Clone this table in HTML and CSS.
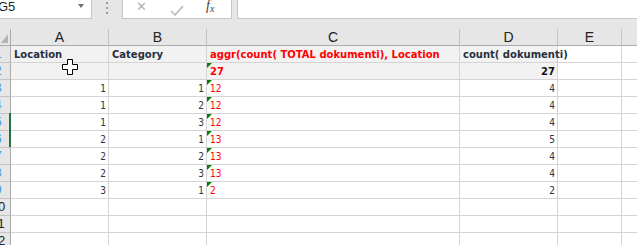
FILE: index.html
```html
<!DOCTYPE html>
<html>
<head>
<meta charset="utf-8">
<link rel="stylesheet" href="styles.css">
</head>
<body>
<div class="app">
  <div class="fbar">
    <div class="namebox"><span class="nb-text">G5</span><span class="nb-arrow"></span></div>
    <div class="dots"><i></i><i></i><i></i></div>
    <div class="btnbox">
      <span class="fbtn x">✕</span>
      <span class="fbtn ok"><svg width="14" height="11" viewBox="0 0 14 11"><path d="M1 6 L5 10 L13 1" fill="none" stroke="#b3b3b3" stroke-width="1.4"/></svg></span>
      <span class="fbtn fx">f<sub>x</sub></span>
    </div>
    <div class="formula"></div>
  </div>
  <div class="strip"></div>
  <div class="sheet">
    <div class="grid">
      <div class="ch corner"><span class="tri"></span></div>
      <div class="ch">A</div><div class="ch">B</div><div class="ch">C</div><div class="ch">D</div><div class="ch">E</div><div class="ch last"></div>

      <div class="rh blue"><span>1</span></div>
      <div class="c g b hd">Location</div><div class="c g b hd">Category</div><div class="c g b red">aggr(count( TOTAL dokumenti), Location</div><div class="c g b hd">count( dokumenti)</div><div class="c"></div><div class="c last"></div>

      <div class="rh blue"><span>2</span></div>
      <div class="c g"></div><div class="c g"></div><div class="c g b red mark">27</div><div class="c g b r blk">27</div><div class="c"></div><div class="c last"></div>

      <div class="rh blue"><span>3</span></div>
      <div class="c r n">1</div><div class="c r n">1</div><div class="c n red mark">12</div><div class="c r n">4</div><div class="c"></div><div class="c last"></div>

      <div class="rh blue"><span>4</span></div>
      <div class="c r n">1</div><div class="c r n">2</div><div class="c n red mark">12</div><div class="c r n">4</div><div class="c"></div><div class="c last"></div>

      <div class="rh blue"><span>5</span></div>
      <div class="c r n">1</div><div class="c r n">3</div><div class="c n red mark">12</div><div class="c r n">4</div><div class="c"></div><div class="c last"></div>

      <div class="rh blue"><span>6</span></div>
      <div class="c r n">2</div><div class="c r n">1</div><div class="c n red mark">13</div><div class="c r n">5</div><div class="c"></div><div class="c last"></div>

      <div class="rh blue"><span>7</span></div>
      <div class="c r n">2</div><div class="c r n">2</div><div class="c n red mark">13</div><div class="c r n">4</div><div class="c"></div><div class="c last"></div>

      <div class="rh blue"><span>8</span></div>
      <div class="c r n">2</div><div class="c r n">3</div><div class="c n red mark">13</div><div class="c r n">4</div><div class="c"></div><div class="c last"></div>

      <div class="rh blue"><span>9</span></div>
      <div class="c r n">3</div><div class="c r n">1</div><div class="c n red mark">2</div><div class="c r n">2</div><div class="c"></div><div class="c last"></div>

      <div class="rh"><span>10</span></div>
      <div class="c"></div><div class="c"></div><div class="c"></div><div class="c"></div><div class="c"></div><div class="c last"></div>

      <div class="rh"><span>11</span></div>
      <div class="c"></div><div class="c"></div><div class="c"></div><div class="c"></div><div class="c"></div><div class="c last"></div>

      <div class="rh"><span>12</span></div>
      <div class="c"></div><div class="c"></div><div class="c"></div><div class="c"></div><div class="c"></div><div class="c last"></div>
    </div>
    <div class="selbar"></div>
    <svg class="cursor" width="16" height="16" viewBox="0 0 16 16"><path d="M5.5 0.5 H10.5 V5.5 H15.5 V10.5 H10.5 V15.5 H5.5 V10.5 H0.5 V5.5 H5.5 Z" fill="#fff" stroke="#000" stroke-width="1"/></svg>
  </div>
</div>
</body>
</html>
```

FILE: styles.css
```css
* { box-sizing: border-box; }
html, body { margin: 0; padding: 0; background: #fff; overflow: hidden; }
.app { width: 637px; height: 245px; background: #e6e6e6; overflow: hidden; font-family: "DejaVu Sans", sans-serif; }

.fbar { display: flex; height: 19px; align-items: stretch; }
.namebox { width: 92px; background: #fff; border-right: 1px solid #c6c6c6; border-bottom: 1px solid #c6c6c6; display: flex; align-items: flex-start; justify-content: space-between; position: relative; }
.nb-text { font-family: "Liberation Sans", sans-serif; font-size: 13px; line-height: 13px; margin-left: -2px; margin-top: 0px; color: #222; }
.nb-arrow { width: 0; height: 0; border-left: 3.5px solid transparent; border-right: 3.5px solid transparent; border-top: 4px solid #707070; margin-top: 4px; margin-right: 7px; }
.dots { width: 30px; display: flex; flex-direction: column; align-items: center; padding-top: 2px; gap: 3px; }
.dots i { display: block; width: 2px; height: 2px; background: #9a9a9a; }
.btnbox { width: 110px; margin-left: 0px; background: #fff; border-left: 1px solid #c6c6c6; border-right: 1px solid #c6c6c6; border-bottom: 1px solid #c6c6c6; display: flex; align-items: flex-start; padding-left: 13px; }
.fbtn { display: block; color: #b0b0b0; }
.fbtn.x { font-family: "DejaVu Sans", sans-serif; font-size: 13px; line-height: 13px; margin-top: 0px; width: 34px; }
.fbtn.ok { width: 36px; margin-top: 1px; }
.fbtn.fx { font-family: "Liberation Serif", serif; font-style: italic; font-size: 14px; line-height: 14px; color: #444; margin-top: -1px; }
.fbtn.fx sub { font-size: 10px; vertical-align: -2px; }
.formula { flex: 1; margin-left: 5px; background: #fff; border-left: 1px solid #c6c6c6; border-bottom: 1px solid #c6c6c6; }
.strip { height: 10px; }

.sheet { position: relative; background: #fff; }
.grid { display: grid; grid-template-columns: 11px 98px 98px 253px 98px 64px 1fr; grid-auto-rows: 17px; }

.ch { background: #e6e6e6; border-right: 1px solid #c3c3c3; border-bottom: 1px solid #ababab; font-family: "Liberation Sans", sans-serif; font-size: 14px; line-height: 16px; color: #222; text-align: center; }
.ch.last { border-right: none; }
.corner { position: relative; border-right: 1px solid #ababab; }
.corner .tri { position: absolute; right: 2px; bottom: 2px; width: 0; height: 0; border-left: 7px solid transparent; border-bottom: 9px solid #b4b4b4; }

.rh { background: #e6e6e6; border-right: 1px solid #ababab; border-bottom: 1px solid #c3c3c3; overflow: hidden; font-family: "Liberation Sans", sans-serif; font-size: 13px; line-height: 16px; color: #222; }
.rh span { display: block; width: 30px; margin-left: -17px; text-align: center; }
.rh.blue { color: #4a9de3; }

.c { position: relative; border-right: 1px solid #d4d4d4; border-bottom: 1px solid #d4d4d4; font-size: 10px; line-height: 12px; padding: 0 2px 1px 3px; display: flex; align-items: flex-end; white-space: nowrap; color: #333; }
.c.last { border-right: none; }
.c.g { background: #f2f2f2; }
.c.b { font-weight: bold; }
.c.hd { color: #27303d; }
.c.r { justify-content: flex-end; }
.c.n { font-family: "DejaVu Sans Condensed", "DejaVu Sans", sans-serif; color: #2e3440; }
.c.red { color: #ff0000; }
.c.blk { color: #111; }
.c.mark::before { content: ""; position: absolute; left: 0; top: 0; width: 0; height: 0; border-top: 5px solid #0b7a0b; border-right: 5px solid transparent; }

.selbar { position: absolute; left: 9px; top: 84px; width: 2px; height: 34px; background: #217346; }
.cursor { position: absolute; left: 62px; top: 30px; }
```
